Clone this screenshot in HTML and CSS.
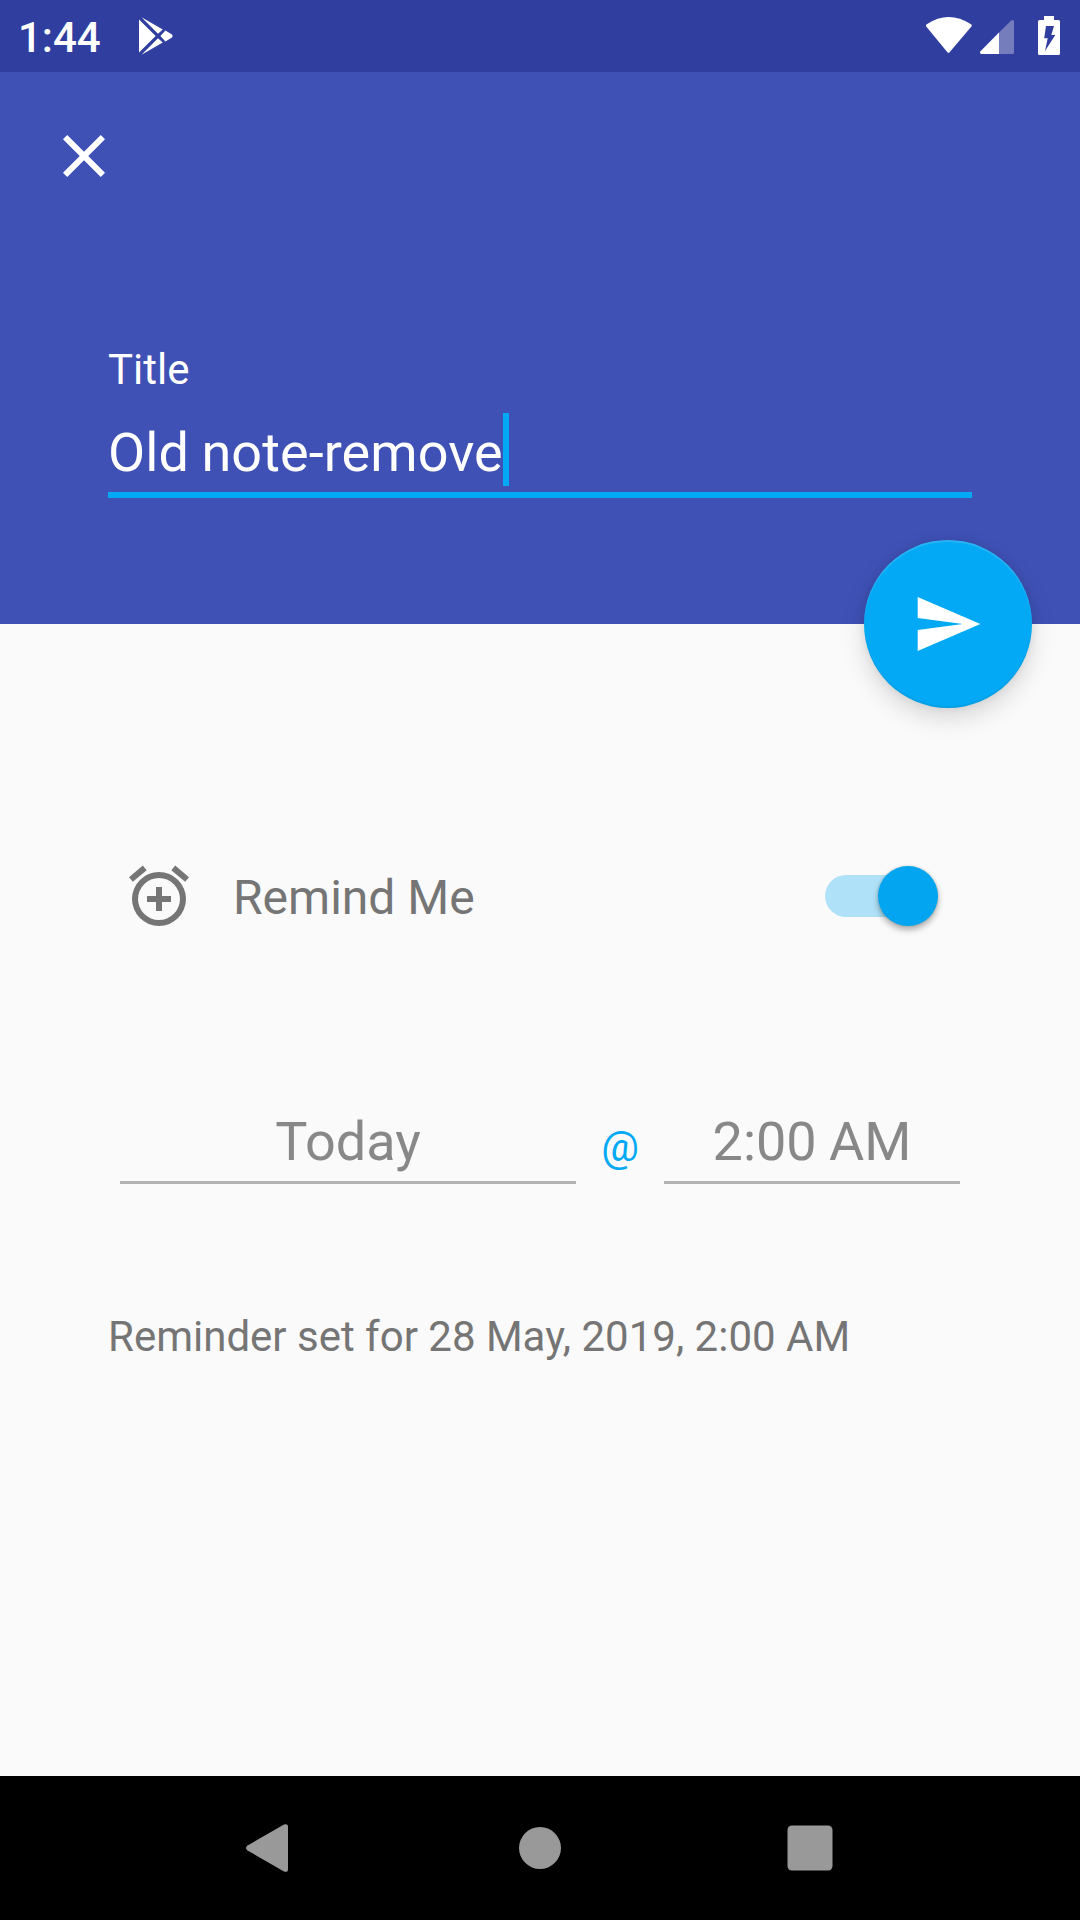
FILE: index.html
```html
<!DOCTYPE html>
<html lang="en">
<head>
<meta charset="utf-8">
<title>Edit reminder</title>
<link rel="stylesheet" href="styles.css">
</head>
<body>
<div class="screen">
  <div class="status-bar">
    <span class="clock">1:44</span>
    <svg class="play-icon" viewBox="138 16 36 40" width="36" height="40">
      <path d="M139 19.6 155.7 36 139 52.4zM141.5 17.2 162.8 29.4 158 33.8zM141.5 54.8 162.8 42.6 158 38.2zM165.4 30.6 172 34.4Q173.4 36 172 37.6L165.4 41.4 160.4 36z"/>
    </svg>
    <svg class="system-icons" viewBox="924 14 138 44" width="138" height="44">
      <path d="M926.2 26.4Q925.6 25 926.8 24.2Q948.5 9.8 971 24.2Q972.2 25 971.4 26.4L949.6 52.2Q948.5 53.4 947.4 52.2z"/>
      <path class="signal-off" d="M999 32.6 1011.2 20.6Q1014 18.800 1014 21.500V52.500Q1014 54 1012.500 54H999z"/>
      <path d="M999 32.600V54H981.500Q979.200 53.500 980.500 51.200z"/>
      <path fill-rule="evenodd" d="M1044 16h10v4h4.500q1.500 0 1.500 1.500v32q0 1.500-1.500 1.500h-19q-1.500 0-1.500-1.500v-32q0-1.500 1.500-1.500h4.500zM1046 26 1044.200 38.300H1047.700L1045 51 1055.300 35H1051.300L1054 26z"/>
    </svg>
  </div>

  <header class="header">
    <svg class="close-icon" viewBox="0 0 24 24" width="72" height="72">
      <path d="M19 6.410 17.590 5 12 10.590 6.410 5 5 6.410 10.590 12 5 17.590 6.410 19 12 13.410 17.590 19 19 17.590 13.410 12z"/>
    </svg>
    <div class="field-label">Title</div>
    <div class="title-field">
      <span class="title-text">Old note-remove</span><span class="caret"></span>
    </div>
    <div class="fab">
      <svg viewBox="0 0 24 24" width="72" height="72"><path d="M1.900 21 22.800 12 1.900 3V10l15 2-15 2z"/></svg>
    </div>
  </header>

  <main class="content">
    <div class="remind-row">
      <svg class="alarm-icon" viewBox="0 0 24 24" width="72" height="72">
        <path d="M22 5.720l-4.600-3.860-1.290 1.530 4.600 3.860zM7.880 3.390 6.600 1.860 2 5.710l1.290 1.530zM13 9h-2v3H8v2h3v3h2v-3h3v-2h-3z"/>
        <path fill-rule="evenodd" d="M12 4a9 9 0 1 0 0 18 9 9 0 0 0 0-18zm0 16a7 7 0 1 1 0-14 7 7 0 0 1 0 14z"/>
      </svg>
      <span class="remind-label">Remind Me</span>
      <div class="switch"><span class="thumb"></span></div>
    </div>
    <div class="date-row">
      <div class="picker date">Today</div>
      <span class="at">@</span>
      <div class="picker time">2:00 AM</div>
    </div>
    <p class="summary">Reminder set for 28 May, 2019, 2:00 AM</p>
  </main>

  <nav class="nav-bar">
    <svg viewBox="0 0 72 72" width="72" height="72"><path d="M13.500 33.600 50 12.600Q54 11 54 15V57Q54 61 50 59.400L13.500 38.400Q10.500 36 13.500 33.600z"/></svg>
    <svg viewBox="0 0 72 72" width="72" height="72"><circle cx="36" cy="36" r="21"/></svg>
    <svg viewBox="0 0 72 72" width="72" height="72"><rect x="13.500" y="13.500" width="45" height="45" rx="4.500"/></svg>
  </nav>
</div>
</body>
</html>
```
FILE: styles.css
```css
body {
  margin: 0;
  font-family: Roboto, sans-serif;
}

.screen {
  display: flex;
  flex-direction: column;
  width: 1080px;
  height: 1920px;
  background: #fafafa;
  overflow: hidden;
}

svg {
  display: block;
  flex: none;
}

.status-bar {
  display: flex;
  align-items: flex-start;
  box-sizing: border-box;
  height: 72px;
  padding: 13px 18px 0;
  background: #303f9f;
  color: #fff;
  fill: #fff;
}

.clock {
  width: 120px;
  font-size: 42px;
  font-weight: 500;
  line-height: 50px;
}

.play-icon {
  margin-top: 3px;
}

.system-icons {
  margin: 1px 0 0 auto;
}

.signal-off {
  fill: #757dbd;
}

.header {
  position: relative;
  box-sizing: border-box;
  height: 552px;
  padding: 48px 108px 0;
  background: #3f51b5;
  color: #fff;
  fill: #fff;
}

.close-icon {
  margin-left: -60px;
}

.field-label {
  margin-top: 153px;
  font-size: 42px;
  line-height: 50px;
}

.title-field {
  display: flex;
  height: 73px;
  margin-top: 18px;
  padding-bottom: 6px;
  border-bottom: 6px solid #03a9f4;
}

.title-text {
  padding-top: 8px;
  font-size: 54px;
  line-height: 64px;
  letter-spacing: 0.08px;
  word-spacing: -1px;
}

.caret {
  width: 6px;
  background: #03a9f4;
}

.fab {
  position: absolute;
  right: 48px;
  bottom: -84px;
  display: flex;
  align-items: center;
  justify-content: center;
  width: 168px;
  height: 168px;
  border-radius: 50%;
  background: #03a9f4;
  box-shadow: 0 10px 24px rgba(0, 0, 0, 0.14), 0 0 8px rgba(0, 0, 0, 0.08),
    inset 0 2px 1px rgba(255, 255, 255, 0.15), inset 0 -2px 1px rgba(0, 0, 0, 0.06);
}

.content {
  flex: 1;
  padding: 236px 108px 0;
  color: #757575;
}

.remind-row {
  display: flex;
  align-items: center;
  height: 72px;
  padding: 0 34.5px 0 15px;
}

.alarm-icon {
  fill: #757575;
}

.remind-label {
  margin: 4px 0 0 38px;
  font-size: 48px;
  line-height: 56px;
}

.switch {
  display: flex;
  align-items: center;
  justify-content: flex-end;
  width: 112.5px;
  height: 42px;
  margin-left: auto;
  border-radius: 21px;
  background: #afe2f9;
}

.thumb {
  flex: none;
  width: 60px;
  height: 60px;
  margin-bottom: 1px;
  border-radius: 50%;
  background: #03a5f0;
  box-shadow: 0 4px 6px rgba(0, 0, 0, 0.3), 0 0 3px rgba(0, 0, 0, 0.15);
}

.date-row {
  display: flex;
  margin-top: 178px;
  padding: 0 12px;
}

.picker {
  box-sizing: border-box;
  height: 74px;
  border-bottom: 3px solid #b2b2b2;
  color: #888;
  font-size: 54px;
  line-height: 64px;
  text-align: center;
}

.date {
  width: 456px;
}

.time {
  width: 296px;
  word-spacing: -1px;
}

.at {
  width: 88px;
  padding-top: 12px;
  color: #03a9f4;
  font-size: 42px;
  line-height: 50px;
  text-align: center;
}

.summary {
  margin: 128px 0 0;
  font-size: 42px;
  line-height: 50px;
}

.nav-bar {
  display: flex;
  align-items: center;
  justify-content: space-between;
  box-sizing: border-box;
  height: 144px;
  padding: 0 234px;
  background: #000;
  fill: #999;
}
```
